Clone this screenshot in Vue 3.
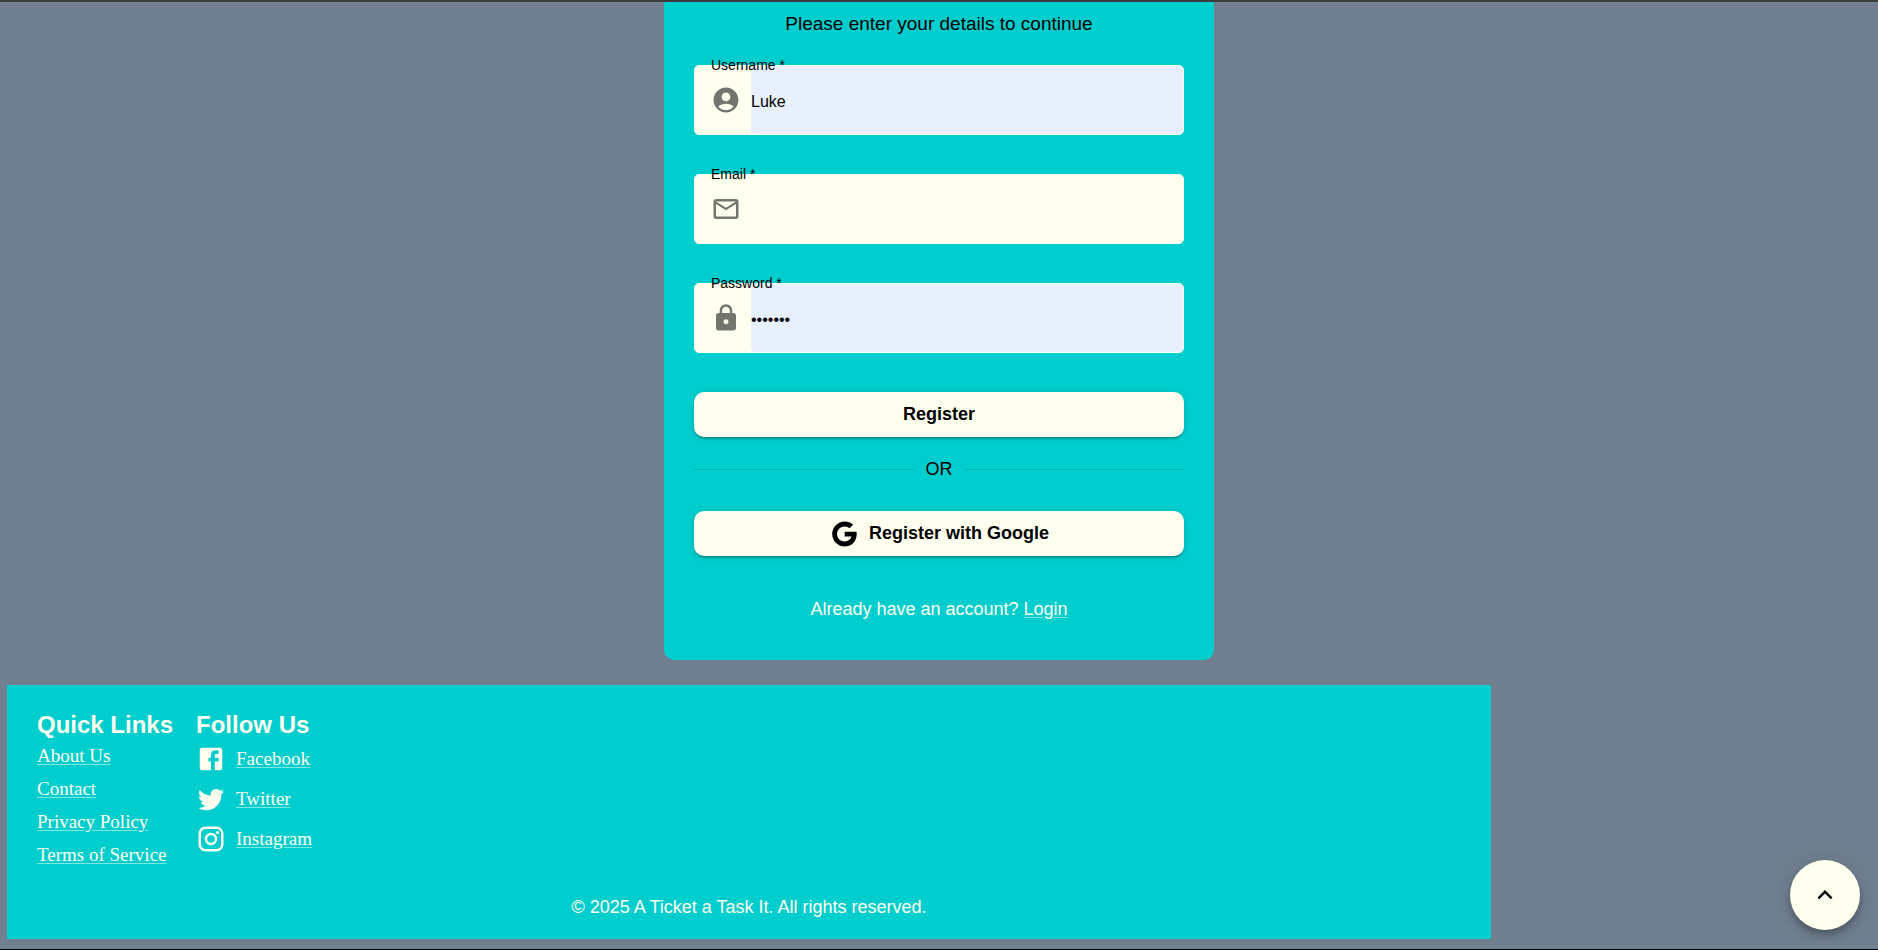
<script setup>
import { ref } from 'vue'

const fields = ref([
  {
    id: 'username', label: 'Username', type: 'text', value: 'Luke', filled: true,
    icon: 'M12 2C6.48 2 2 6.48 2 12s4.48 10 10 10 10-4.48 10-10S17.52 2 12 2zm0 4c1.93 0 3.5 1.57 3.5 3.5S13.93 13 12 13s-3.5-1.57-3.5-3.5S10.07 6 12 6zm0 14c-2.03 0-4.43-.82-6.14-2.88C7.55 15.8 9.68 15 12 15s4.45.8 6.14 2.12C16.43 19.18 14.03 20 12 20z',
  },
  {
    id: 'email', label: 'Email', type: 'email', value: '', filled: false,
    icon: 'M22 6c0-1.1-.9-2-2-2H4c-1.1 0-2 .9-2 2v12c0 1.1.9 2 2 2h16c1.1 0 2-.9 2-2V6zm-2 0-8 5-8-5h16zm0 12H4V8l8 5 8-5v10z',
  },
  {
    id: 'password', label: 'Password', type: 'password', value: 'letmein', filled: true,
    icon: 'M18 8h-1V6c0-2.76-2.24-5-5-5S7 3.24 7 6v2H6c-1.1 0-2 .9-2 2v10c0 1.1.9 2 2 2h12c1.1 0 2-.9 2-2V10c0-1.1-.9-2-2-2zm-6 9c-1.1 0-2-.9-2-2s.9-2 2-2 2 .9 2 2-.9 2-2 2zm3.1-9H8.9V6c0-1.71 1.39-3.1 3.1-3.1s3.1 1.39 3.1 3.1v2z',
  },
])

const quickLinks = ['About Us', 'Contact', 'Privacy Policy', 'Terms of Service']

const socials = [
  {
    name: 'Facebook',
    icon: 'M5 3h14a2 2 0 0 1 2 2v14a2 2 0 0 1-2 2H5a2 2 0 0 1-2-2V5a2 2 0 0 1 2-2m13 2h-2.5A3.5 3.5 0 0 0 12 8.5V11h-2v3h2v7h3v-7h3v-3h-3V9a1 1 0 0 1 1-1h2V5z',
  },
  {
    name: 'Twitter',
    icon: 'M22.46 6c-.77.35-1.6.58-2.46.69.88-.53 1.56-1.37 1.88-2.38-.83.5-1.75.85-2.72 1.05C18.37 4.5 17.26 4 16 4c-2.35 0-4.27 1.92-4.27 4.29 0 .34.04.67.11.98C8.28 9.09 5.11 7.38 3 4.79c-.37.63-.58 1.37-.58 2.15 0 1.49.75 2.81 1.91 3.56-.71 0-1.37-.2-1.95-.5v.03c0 2.08 1.48 3.82 3.44 4.21a4.22 4.22 0 0 1-1.93.07 4.28 4.28 0 0 0 4 2.98 8.521 8.521 0 0 1-5.33 1.84c-.34 0-.68-.02-1.02-.06C3.44 20.29 5.7 21 8.12 21 16 21 20.33 14.46 20.33 8.79c0-.19 0-.37-.01-.56.84-.6 1.56-1.36 2.14-2.23z',
  },
  {
    name: 'Instagram',
    icon: 'M7.8 2h8.4C19.4 2 22 4.6 22 7.8v8.4a5.8 5.8 0 0 1-5.8 5.8H7.8C4.6 22 2 19.4 2 16.2V7.8A5.8 5.8 0 0 1 7.8 2m-.2 2A3.6 3.6 0 0 0 4 7.6v8.8C4 18.39 5.61 20 7.6 20h8.8a3.6 3.6 0 0 0 3.6-3.6V7.6C20 5.61 18.39 4 16.4 4H7.6m9.65 1.5a1.25 1.25 0 0 1 1.25 1.25A1.25 1.25 0 0 1 17.25 8 1.25 1.25 0 0 1 16 6.75a1.25 1.25 0 0 1 1.25-1.25M12 7a5 5 0 0 1 5 5 5 5 0 0 1-5 5 5 5 0 0 1-5-5 5 5 0 0 1 5-5m0 2a3 3 0 0 0-3 3 3 3 0 0 0 3 3 3 3 0 0 0 3-3 3 3 0 0 0-3-3z',
  },
]

const toTop = () => window.scrollTo({ top: 0, behavior: 'smooth' })
</script>

<template>
  <div class="page">
    <main class="card">
      <p class="intro">Please enter your details to continue</p>
      <form class="form" @submit.prevent>
        <div v-for="f in fields" :key="f.id" class="field" :class="{ filled: f.filled }">
          <label class="label" :for="f.id">{{ f.label }} *</label>
          <svg class="icon adornment" viewBox="0 0 24 24" aria-hidden="true"><path :d="f.icon" /></svg>
          <input :id="f.id" v-model="f.value" class="input" :type="f.type" autocomplete="off" required />
        </div>
        <button class="button" type="submit">Register</button>
      </form>
      <div class="divider"><span>OR</span></div>
      <button class="button" type="button">
        <svg class="icon" viewBox="0 0 24 24" aria-hidden="true">
          <path d="M12.545 10.239v3.821h5.445c-.712 2.315-2.647 3.972-5.445 3.972a6.033 6.033 0 1 1 0-12.064c1.498 0 2.866.549 3.921 1.453l2.814-2.814A9.969 9.969 0 0 0 12.545 2C7.021 2 2.543 6.477 2.543 12s4.478 10 10.002 10c8.396 0 10.249-7.85 9.426-11.748l-9.426-.013z" />
        </svg>
        Register with Google
      </button>
      <p class="switch">Already have an account? <a href="#login">Login</a></p>
    </main>

    <footer class="footer">
      <div class="columns">
        <nav aria-labelledby="quick-title">
          <h2 id="quick-title" class="heading">Quick Links</h2>
          <ul class="list quick">
            <li v-for="name in quickLinks" :key="name"><a href="#">{{ name }}</a></li>
          </ul>
        </nav>
        <nav aria-labelledby="follow-title">
          <h2 id="follow-title" class="heading">Follow Us</h2>
          <ul class="list">
            <li v-for="s in socials" :key="s.name" class="social">
              <svg class="icon" viewBox="0 0 24 24" aria-hidden="true"><path :d="s.icon" /></svg>
              <a href="#">{{ s.name }}</a>
            </li>
          </ul>
        </nav>
      </div>
      <p class="copyright">© 2025 A Ticket a Task It. All rights reserved.</p>
    </footer>

    <button class="fab" type="button" aria-label="Back to top" @click="toTop">
      <svg class="icon" viewBox="0 0 24 24" aria-hidden="true"><path d="M7.41 15.41 12 10.83l4.59 4.58L18 14l-6-6-6 6z" /></svg>
    </button>
  </div>
</template>

<style>
body {
  margin: 0;
  background: #708090;
}
</style>

<style scoped>
.page {
  box-sizing: border-box;
  min-height: 100vh;
  display: flex;
  flex-direction: column;
  border-top: 2px solid #3c3c3c;
  border-bottom: 1px solid #000;
  padding: 0 7px 10px;
  background: #708090;
  color: #000;
  font-family: "Liberation Sans", Arial, sans-serif;
  font-size: 18px;
}

p,
h2,
ul {
  margin: 0;
}

a {
  color: inherit;
  text-underline-offset: 2px;
  text-decoration-color: rgba(255, 255, 240, 0.5);
}

.icon {
  width: 30px;
  height: 30px;
  flex: none;
  fill: currentColor;
}

.card {
  box-sizing: border-box;
  width: 100%;
  max-width: 550px;
  align-self: center;
  padding: 7px 30px 39px;
  border-radius: 0 0 10px 10px;
  background: #00cdcd;
}

.intro {
  font-size: 19px;
  line-height: 30px;
  text-align: center;
}

.form {
  display: flex;
  flex-direction: column;
  gap: 39px;
  margin-top: 26px;
}

.field {
  box-sizing: border-box;
  position: relative;
  height: 70px;
  display: flex;
  align-items: center;
  gap: 10px;
  padding-left: 16px;
  border: 1px solid #fffff0;
  border-radius: 5px;
  background: #fffff0;
}

.label {
  position: absolute;
  top: -11px;
  left: 16px;
  font-size: 14px;
  line-height: 20px;
}

.adornment {
  color: #757570;
}

.input {
  box-sizing: border-box;
  flex: 1;
  min-width: 0;
  align-self: stretch;
  padding: 3px 0 0;
  border: 0;
  border-radius: 4px;
  outline: 0;
  background: transparent;
  font-family: inherit;
  font-size: 16px;
  color: #000;
}

.filled .input {
  background: #e8f0fe;
}

.button {
  display: flex;
  align-items: center;
  justify-content: center;
  gap: 10px;
  width: 100%;
  min-height: 45px;
  padding: 7px 20px;
  border: 0;
  border-radius: 10px;
  background: #fffff0;
  box-shadow: 0 3px 2px -2px rgba(0, 0, 0, 0.2), 0 2px 2px rgba(0, 0, 0, 0.14), 0 1px 6px rgba(0, 0, 0, 0.12);
  color: #000;
  font-family: inherit;
  font-size: 18px;
  font-weight: 700;
  cursor: pointer;
}

.divider {
  display: flex;
  align-items: center;
  gap: 12px;
  margin: 20px 0 29px;
  line-height: 25px;
}

.divider::before,
.divider::after {
  content: "";
  flex: 1;
  border-top: 1px solid rgba(0, 0, 0, 0.12);
}

.switch {
  margin-top: 41px;
  line-height: 24px;
  text-align: center;
  color: #fffff0;
}

.footer {
  box-sizing: border-box;
  width: 80%;
  max-width: 1484px;
  margin-top: 25px;
  padding: 20px 30px;
  background: #00cdcd;
  color: #fffff0;
}

.columns {
  display: flex;
  gap: 23px;
}

.heading {
  font-size: 24px;
  font-weight: 700;
  line-height: 39px;
}

.list {
  padding: 0;
  list-style: none;
  font-family: "Liberation Serif", "Times New Roman", serif;
  font-size: 19px;
}

.quick li {
  padding-bottom: 10px;
  line-height: 23px;
}

.social {
  display: flex;
  align-items: center;
  gap: 10px;
  padding-bottom: 10px;
  line-height: 30px;
}

.copyright {
  margin-top: 19px;
  line-height: 24px;
  text-align: center;
}

.fab {
  position: fixed;
  right: 18px;
  bottom: 20px;
  display: flex;
  align-items: center;
  justify-content: center;
  width: 70px;
  height: 70px;
  padding: 0;
  border: 0;
  border-radius: 50%;
  background: #fffff0;
  box-shadow: 0 4px 6px -1px rgba(0, 0, 0, 0.2), 0 7px 12px rgba(0, 0, 0, 0.14), 0 1px 22px rgba(0, 0, 0, 0.12);
  color: #000;
  cursor: pointer;
}
</style>
